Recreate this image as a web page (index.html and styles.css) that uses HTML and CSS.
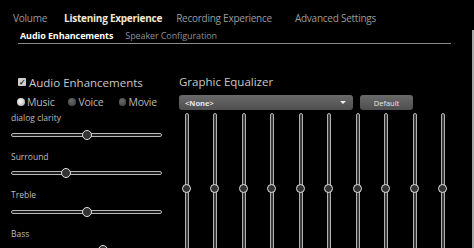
FILE: index.html
```html
<!DOCTYPE html>
<html lang="en">
<head>
  <meta charset="UTF-8">
  <title>Audio Settings</title>
  <link rel="stylesheet" href="styles.css">
</head>
<body>
  <div class="window">
    <nav class="tabs">
      <a class="tab">Volume</a>
      <a class="tab active">Listening Experience</a>
      <a class="tab">Recording Experience</a>
      <a class="tab">Advanced Settings</a>
    </nav>
    <nav class="subtabs">
      <a class="subtab active">Audio Enhancements</a>
      <a class="subtab">Speaker Configuration</a>
    </nav>

    <div class="content">
      <div class="left">
        <label class="check-row"><span class="checkbox">&#10003;</span>Audio Enhancements</label>
        <div class="radios">
          <span class="radio on"></span><span class="radio-label">Music</span>
          <span class="radio"></span><span class="radio-label">Voice</span>
          <span class="radio"></span><span class="radio-label">Movie</span>
        </div>

        <div class="field">
          <div class="field-label">dialog clarity</div>
          <div class="hslider"><span class="thumb" style="left: 50%"></span></div>
        </div>
        <div class="field">
          <div class="field-label">Surround</div>
          <div class="hslider"><span class="thumb" style="left: 36%"></span></div>
        </div>
        <div class="field">
          <div class="field-label">Treble</div>
          <div class="hslider"><span class="thumb" style="left: 50%"></span></div>
        </div>
        <div class="field">
          <div class="field-label">Bass</div>
          <div class="hslider"><span class="thumb" style="left: 61%"></span></div>
        </div>
      </div>

      <div class="right">
        <h2 class="eq-title">Graphic Equalizer</h2>
        <div class="eq-controls">
          <div class="dropdown"><span>&lt;None&gt;</span><span class="arrow"></span></div>
          <button class="btn">Default</button>
        </div>
        <div class="eq">
          <div class="vslider"><span class="vthumb"></span></div>
          <div class="vslider"><span class="vthumb"></span></div>
          <div class="vslider"><span class="vthumb"></span></div>
          <div class="vslider"><span class="vthumb"></span></div>
          <div class="vslider"><span class="vthumb"></span></div>
          <div class="vslider"><span class="vthumb"></span></div>
          <div class="vslider"><span class="vthumb"></span></div>
          <div class="vslider"><span class="vthumb"></span></div>
          <div class="vslider"><span class="vthumb"></span></div>
          <div class="vslider"><span class="vthumb"></span></div>
        </div>
      </div>
    </div>
    <div class="edge"></div>
  </div>
</body>
</html>
```

FILE: styles.css
```css
html, body {
  margin: 0;
  padding: 0;
  background: #000;
  overflow: hidden;
}
body {
  font-family: "Open Sans", "Noto Sans", sans-serif;
  color: #c8c8c8;
  width: 474px;
  height: 248px;
}
.window {
  position: relative;
  height: 248px;
  overflow: hidden;
}
.edge {
  position: absolute;
  left: 472px;
  top: 30px;
  width: 2px;
  height: 218px;
  background: #a8a8a8;
}
.tabs {
  display: flex;
  height: 28px;
  padding: 8px 0 0 13px;
  align-items: center;
  box-sizing: border-box;
}
.tab {
  font-size: 10px;
  color: #9b9b9b;
  letter-spacing: -0.25px;
}
.tab:nth-child(1) {
  margin-right: 17px;
}
.tab:nth-child(2) {
  margin-right: 14px;
}
.tab:nth-child(3) {
  margin-right: 23px;
}
.tab.active {
  color: #f2e8d6;
  font-weight: bold;
}
.subtabs {
  display: flex;
  margin-left: 18px;
  width: 433px;
  height: 15px;
  align-items: center;
  border-bottom: 1px solid #8a8a8a;
}
.subtab {
  font-size: 9px;
  color: #8f8f8f;
  letter-spacing: -0.1px;
}
.subtab.active {
  color: #fff;
  font-weight: bold;
  margin-left: 2px;
  margin-right: 12px;
}
.content {
  display: flex;
  margin-top: 31px;
}
.left {
  width: 160px;
  padding-left: 11px;
}
.check-row {
  display: flex;
  align-items: center;
  font-size: 11.5px;
  color: #c8c8c8;
  height: 14px;
  margin-left: 7px;
}
.checkbox {
  display: inline-flex;
  align-items: center;
  justify-content: center;
  width: 8px;
  height: 8px;
  margin-right: 3px;
  background: #cfcfcf;
  color: #222;
  font-size: 8px;
  line-height: 1;
  border-radius: 1px;
  font-weight: bold;
}
.radios {
  display: flex;
  align-items: center;
  height: 14px;
  margin-top: 5.5px;
  margin-left: 6px;
  font-size: 10.5px;
  color: #b8b8b8;
  letter-spacing: -0.2px;
}
.radio {
  width: 8px;
  height: 8px;
  border-radius: 50%;
  background: radial-gradient(circle at 40% 35%, #6a6a6a, #3c3c3c);
  margin-right: 2px;
}
.radio.on {
  background: radial-gradient(circle at 40% 40%, #ffffff, #a0a0a0);
}
.radio-label {
  margin-right: 14px;
}
.radio-label:nth-of-type(4) {
  margin-right: 15px;
}
.field {
  margin-top: 3.5px;
}
.field + .field {
  margin-top: 14px;
}
.field-label {
  font-size: 8.5px;
  color: #bcbcbc;
  height: 11px;
  line-height: 11px;
}
.hslider {
  position: relative;
  width: 149px;
  height: 2px;
  margin-top: 9.5px;
  border: 1px solid #b8b8b8;
  border-radius: 3px;
  background: #1a1a1a;
}
.thumb {
  position: absolute;
  top: 50%;
  width: 8px;
  height: 8px;
  margin: -5px 0 0 -5px;
  border: 1px solid #e2e2e2;
  border-radius: 50%;
  background: #333;
}
.right {
  flex: 1;
  padding-left: 8px;
}
.eq-title {
  font-size: 11.5px;
  font-weight: normal;
  color: #c8c8c8;
  margin: 0;
  height: 14px;
  line-height: 14px;
}
.eq-controls {
  display: flex;
  margin-top: 6px;
  gap: 7px;
}
.dropdown {
  display: flex;
  align-items: center;
  justify-content: space-between;
  width: 174px;
  height: 15px;
  padding: 0 7px 0 6px;
  box-sizing: border-box;
  border-radius: 3px;
  background: linear-gradient(#6a6a6a, #4e4e4e);
  font-size: 7.5px;
  font-weight: bold;
  color: #e6e6e6;
}
.arrow {
  width: 0;
  height: 0;
  border-left: 3px solid transparent;
  border-right: 3px solid transparent;
  border-top: 3px solid #f0f0f0;
}
.btn {
  width: 53px;
  height: 15px;
  padding: 0;
  border: none;
  border-radius: 3px;
  background: linear-gradient(#6a6a6a, #4e4e4e);
  color: #e6e6e6;
  font-family: inherit;
  font-size: 7.5px;
}
.eq {
  display: flex;
  justify-content: space-between;
  width: 260px;
  margin-left: 6px;
  margin-top: 3px;
}
.vslider {
  position: relative;
  width: 2px;
  height: 140px;
  border: 1px solid #b0b0b0;
  border-radius: 2px;
  background: #3a3a3a;
}
.vthumb {
  position: absolute;
  left: 50%;
  top: 70px;
  width: 7px;
  height: 7px;
  margin-left: -5px;
  border: 1.5px solid #e2e2e2;
  border-radius: 50%;
  background: #333;
}
```
